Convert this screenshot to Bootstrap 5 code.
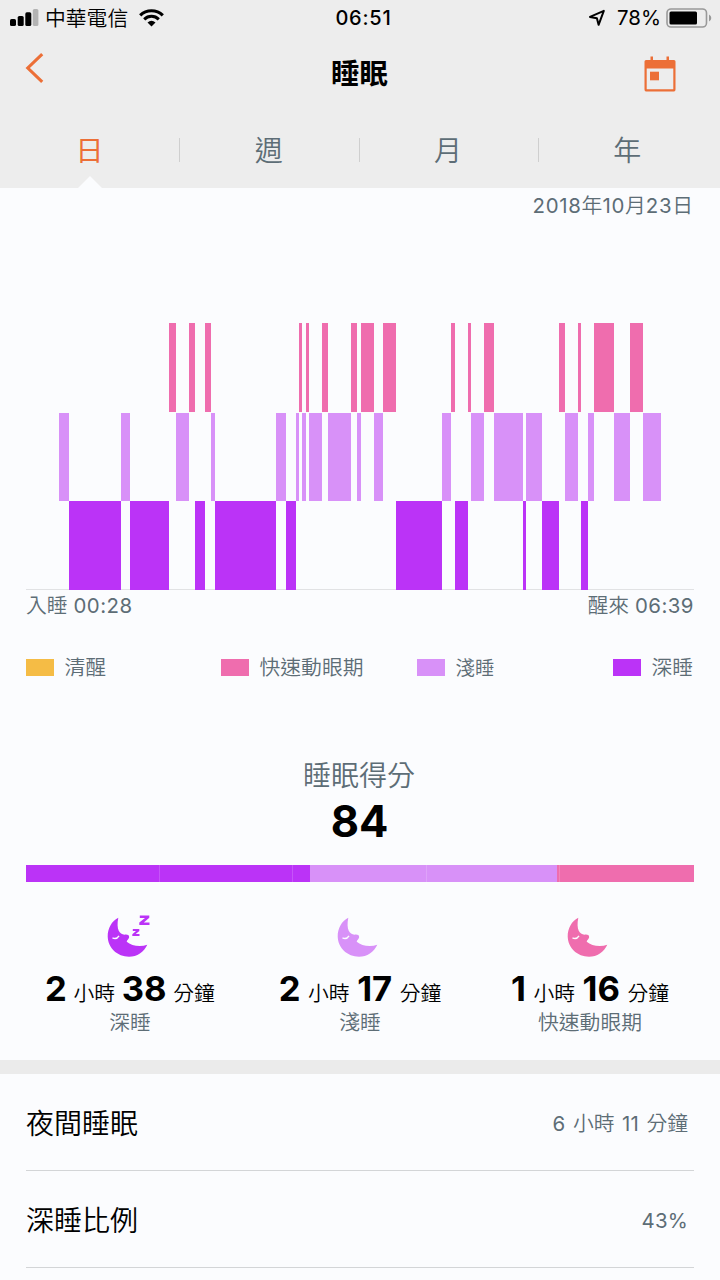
<!DOCTYPE html>
<html lang="zh-Hant">
  <head>
    <meta charset="UTF-8" />
    <meta name="viewport" content="width=device-width, initial-scale=1.0" />
    <title>睡眠</title>
    <link
      href="https://cdn.jsdelivr.net/npm/bootstrap@5.3.0/dist/css/bootstrap.min.css"
      rel="stylesheet"
    />
    <style>
      :root {
        --deep: #bb33f7;
        --light-sleep: #d891f8;
        --rem: #ef6dae;
        --awake: #f5bc45;
        --accent: #ec6f37;
        --slate: #5d6d76;
      }
      body {
        font-family: Inter, "Noto Sans CJK TC", sans-serif;
        font-size: 20.8px;
        font-weight: 350;
        line-height: 28px;
        color: #000;
        background-color: #fbfcfe;
        overflow: hidden;
      }
      svg {
        display: block;
        flex: none;
      }
      .text-slate {
        color: var(--slate);
      }
      .num {
        font-size: 20.4px;
        font-weight: 400;
        letter-spacing: 0.2px;
      }
      .top-area {
        height: 188px;
        background-color: #ededed;
      }
      .status-bar {
        height: 36px;
        padding: 0 8px 0 10px;
        font-size: 20px;
      }
      .status-bar .carrier {
        font-size: 20.8px;
        margin: 2px 11px 0 6px;
      }
      .status-bar .clock {
        font-weight: 500;
        letter-spacing: 0.8px;
        padding-left: 5px;
      }
      .status-bar .charge {
        letter-spacing: 0;
        margin: 0 5px 0 11px;
      }
      .title-bar {
        height: 76px;
        padding: 0 44px 0 25px;
      }
      .title-bar h1 {
        font-size: 28.4px;
        font-weight: 700;
        line-height: 40px;
        padding-left: 18px;
      }
      .back-arrow {
        margin-bottom: 12px;
      }
      .period-tabs {
        height: 76px;
        padding-right: 3px;
        font-size: 28px;
      }
      .period-tabs .nav-link {
        color: var(--slate);
        font-weight: inherit;
        padding: 0;
        line-height: 78px;
      }
      .period-tabs .nav-item + .nav-item::before {
        content: "";
        position: absolute;
        left: 0;
        top: 26px;
        width: 1px;
        height: 24px;
        background-color: #cfcfcf;
      }
      .period-tabs .nav-link.active {
        color: var(--accent);
        font-weight: 400;
      }
      .period-tabs .nav-link.active::after {
        content: "";
        position: absolute;
        left: calc(50% - 12px);
        bottom: 2px;
        border: 12px solid transparent;
        border-top: 0;
        border-bottom-color: #fbfcfe;
      }
      .chart-area {
        padding: 4px 26px 0;
      }
      .night-date {
        padding-right: 1px;
      }
      .night-date .num {
        letter-spacing: 0.7px;
      }
      .hypnogram {
        height: 267px;
        margin-top: 103px;
        margin-bottom: 2px;
        padding: 0 33px;
        box-shadow: inset 0 -1px #e1e2e4;
      }
      .hypnogram div {
        height: 89px;
      }
      .seg-rem {
        background-color: var(--rem);
      }
      .seg-light {
        background-color: var(--light-sleep);
      }
      .seg-deep {
        background-color: var(--deep);
      }
      .seg-awake {
        background-color: var(--awake);
      }
      .hypnogram .seg-light {
        margin-top: 89.5px;
        height: 88.5px;
      }
      .hypnogram .seg-deep {
        margin-top: 178px;
      }
      .sleep-times .num {
        letter-spacing: 0.5px;
      }
      .legend-row {
        display: grid;
        grid-template-columns: 195px 196px 196px auto;
        margin-top: 34px;
      }
      .swatch {
        width: 28px;
        height: 17px;
        margin: -1px 10.5px 0 0;
      }
      .score-label {
        font-size: 28px;
        line-height: 40px;
        margin-top: 74px;
        padding-right: 2px;
      }
      .score-value {
        font-size: 43.5px;
        font-weight: 700;
        line-height: 52px;
        margin-top: -1px;
        padding-right: 1px;
      }
      .stage-bar {
        position: relative;
        height: 17px;
        margin: 18px 26px 0;
        border-radius: 0;
        background: none;
      }
      /* faint tick at every fifth of the bar */
      .stage-bar::after {
        content: "";
        position: absolute;
        inset: 0 2px 0 0;
        background: repeating-linear-gradient(
          90deg,
          transparent 0 132.6px,
          rgba(255, 255, 255, 0.16) 132.6px 133.6px
        );
      }
      .stage-totals {
        padding: 0 15px;
        margin-top: 31px;
      }
      .stage-totals svg {
        margin: 0 auto;
      }
      .duration {
        line-height: 44px;
        margin-top: 9px;
        word-spacing: 0.8px;
      }
      .duration b {
        font-size: 34.6px;
        font-weight: 700;
      }
      .col + .col .duration {
        word-spacing: 1.7px;
      }
      .stage-name {
        margin-top: -7px;
      }
      .divider-band {
        height: 14px;
        margin-top: 23px;
        background-color: #ebebeb;
      }
      .detail-list {
        padding: 0 26px;
      }
      .detail-list li {
        height: 97px;
        padding: 4px 6px 0 0;
        border-bottom: 1px solid #d3d5d7;
      }
      .detail-list .item-name {
        font-size: 28px;
      }
      .item-value {
        word-spacing: 1.6px;
      }
    </style>
  </head>
  <body>
    <svg class="d-none">
      <symbol id="moon" viewBox="1.5 -0.5 46 44">
        <path d="M12.8 4.2 C6 7.5 2.2 15 2.2 23 C2.5 34.5 12 43.2 23.5 43.2 C31.5 43.2 38.5 38.5 41.8 31.2 C35 33.5 26 32.5 21.2 28.2 C21.5 26.5 23 26 23.6 24 C24 21.5 22 20.8 19 21.2 C14 20.5 10.5 16 12.8 4.2Z" />
        <path d="M7 24.3 Q11 26.3 13.5 22.3" fill="none" stroke="#fbfcfe" stroke-width="1.4" />
      </symbol>
    </svg>

    <header class="top-area">
      <!-- Status bar -->
      <div class="status-bar d-flex align-items-center">
        <div class="col d-flex align-items-center">
          <svg width="29" height="18" viewBox="0 0 29 18">
            <rect x="0" y="10" width="6" height="7" rx="1.6" />
            <rect x="7.7" y="7" width="6" height="10" rx="1.6" />
            <rect x="15.3" y="3.3" width="6" height="13.7" rx="1.6" />
            <rect x="22.8" y="0" width="5.6" height="17" rx="1.6" fill="#b3b3b3" />
          </svg>
          <span class="carrier">中華電信</span>
          <svg width="25" height="18" viewBox="0 0 25 18" fill="none" stroke="#000">
            <path d="M1.2 6.3 A16.3 16.3 0 0 1 23.8 6.3" stroke-width="3.2" />
            <path d="M5.2 10.3 A10.5 10.5 0 0 1 19.8 10.3" stroke-width="3" />
            <path d="M8.5 13.4 Q12.5 10.2 16.5 13.4 L12.5 17.4Z" fill="#000" stroke="none" />
          </svg>
        </div>
        <div class="clock">06:51</div>
        <div class="col d-flex align-items-center justify-content-end">
          <svg width="18" height="18" viewBox="0 0 18 18">
            <path d="M2 7.9 L15.8 1.8 L10.6 15.8 L8.9 9.3Z" fill="none" stroke="#000" stroke-width="2" stroke-linejoin="round" />
          </svg>
          <span class="num charge">78%</span>
          <svg width="46" height="20" viewBox="0 0 46 20">
            <rect x="1" y="1" width="39.5" height="18" rx="4" fill="none" stroke="#999" stroke-width="1.6" />
            <rect x="3.5" y="3.5" width="27.5" height="13" rx="1.5" />
            <path d="M43 6.5 Q45.3 7.5 45.3 10 Q45.3 12.5 43 13.5Z" fill="#999" />
          </svg>
        </div>
      </div>

      <!-- Title -->
      <div class="title-bar d-flex align-items-center">
        <div class="col">
          <svg width="19" height="30" viewBox="0 0 19 30" class="back-arrow">
            <path d="M17.2 1.2 L2.8 15 L17.2 28.8" fill="none" stroke="#ec6f37" stroke-width="3.1" />
          </svg>
        </div>
        <h1 class="mb-0">睡眠</h1>
        <div class="col d-flex justify-content-end">
          <svg width="32" height="36" viewBox="0 0 32 36" fill="#ec6f37">
            <path fill-rule="evenodd" d="M2 4 H6.5 V0.5 H9 V4 H22.5 V0.5 H25 V4 H30 Q31.5 4 31.5 5.5 V33.5 Q31.5 35.5 30 35.5 H2 Q0.5 35.5 0.5 33.5 V5.5 Q0.5 4 2 4Z M2.7 12.6 V33.2 H29.3 V12.6Z" />
            <rect x="6" y="15.7" width="9" height="8.6" />
          </svg>
        </div>
      </div>

      <ul class="period-tabs nav nav-justified">
        <li class="nav-item position-relative"><a class="nav-link active position-relative" href="#">日</a></li>
        <li class="nav-item position-relative"><a class="nav-link" href="#">週</a></li>
        <li class="nav-item position-relative"><a class="nav-link" href="#">月</a></li>
        <li class="nav-item position-relative"><a class="nav-link" href="#">年</a></li>
      </ul>
    </header>

    <!-- Night chart -->
    <section class="chart-area text-slate">
      <div class="night-date text-end"><span class="num">2018</span>年<span class="num">10</span>月<span class="num">23</span>日</div>
      <div id="hypnogram" class="hypnogram d-flex"></div>
      <div class="sleep-times d-flex justify-content-between">
        <span>入睡 <span class="num">00:28</span></span>
        <span>醒來 <span class="num">06:39</span></span>
      </div>
      <div class="legend-row">
        <div class="d-flex align-items-center"><span class="swatch seg-awake"></span>清醒</div>
        <div class="d-flex align-items-center"><span class="swatch seg-rem"></span>快速動眼期</div>
        <div class="d-flex align-items-center"><span class="swatch seg-light"></span><span style="font-size: 19.4px">淺睡</span></div>
        <div class="d-flex align-items-center"><span class="swatch seg-deep"></span>深睡</div>
      </div>
    </section>

    <!-- Score -->
    <section class="text-center">
      <div class="score-label text-slate">睡眠得分</div>
      <div class="score-value">84</div>
      <div id="stageBar" class="stage-bar progress"></div>

      <div class="stage-totals d-flex">
        <div class="col">
          <svg width="46" height="44" viewBox="0 0 46 44" fill="#bb33f7">
            <use href="#moon" width="46" height="44" />
            <path d="M32.8 2.4 H42.3 V4.8 L36.8 9.4 H42.5 V12 H32.3 V9.6 L38 5 H32.8Z M25.8 16 H32.3 V17.9 L28.7 21.1 H32.5 V23 H25.3 V21.2 L29 17.9 H25.8Z" />
          </svg>
          <div class="duration"><b>2</b> 小時 <b>38</b> 分鐘</div>
          <div class="stage-name text-slate">深睡</div>
        </div>
        <div class="col">
          <svg width="46" height="44" viewBox="0 0 46 44" fill="#d891f8">
            <use href="#moon" width="46" height="44" />
          </svg>
          <div class="duration"><b>2</b> 小時 <b>17</b> 分鐘</div>
          <div class="stage-name text-slate">淺睡</div>
        </div>
        <div class="col">
          <svg width="46" height="44" viewBox="0 0 46 44" fill="#ef6dae">
            <use href="#moon" width="46" height="44" />
          </svg>
          <div class="duration"><b>1</b> 小時 <b>16</b> 分鐘</div>
          <div class="stage-name text-slate">快速動眼期</div>
        </div>
      </div>
    </section>

    <div class="divider-band"></div>

    <ul class="detail-list list-unstyled mb-0">
      <li class="d-flex align-items-center justify-content-between">
        <span class="item-name">夜間睡眠</span>
        <span class="item-value text-slate"><span class="num">6</span> 小時 <span class="num">11</span> 分鐘</span>
      </li>
      <li class="d-flex align-items-center justify-content-between">
        <span class="item-name">深睡比例</span>
        <span class="item-value text-slate num">43%</span>
      </li>
    </ul>

    <script src="https://cdn.jsdelivr.net/npm/bootstrap@5.3.0/dist/js/bootstrap.bundle.min.js"></script>
    <script>
      // stage letter + minutes, in order through the night (l = light, d = deep, r = rem)
      const night =
        "l6 d32 l6 d24 r4 l8 r4 d6 r4 l2 d38 l6 d6 l2 r2 l2 r2 l8 r4 l14 r4 l2 r8 l6 r8 " +
        "d28 l6 r2 d8 r2 l8 r6 l18 d2 l10 d10 r4 l8 r2 d4 l4 r12 l10 r8 l11";
      const names = { l: "light", d: "deep", r: "rem" };
      const totals = { d: 0, l: 0, r: 0 };
      const segments = night.split(" ").map((s) => [s[0], Number(s.slice(1))]);
      segments.forEach(([stage, min]) => (totals[stage] += min));
      const all = totals.d + totals.l + totals.r;

      function addBlock(parent, stage, min) {
        const el = document.createElement("div");
        el.className = "seg-" + names[stage];
        el.style.width = (min / all) * 100 + "%";
        parent.appendChild(el);
      }

      const hypnogram = document.getElementById("hypnogram");
      segments.forEach(([stage, min]) => addBlock(hypnogram, stage, min));

      const stageBar = document.getElementById("stageBar");
      Object.keys(totals).forEach((stage) => addBlock(stageBar, stage, totals[stage]));
    </script>
  </body>
</html>
